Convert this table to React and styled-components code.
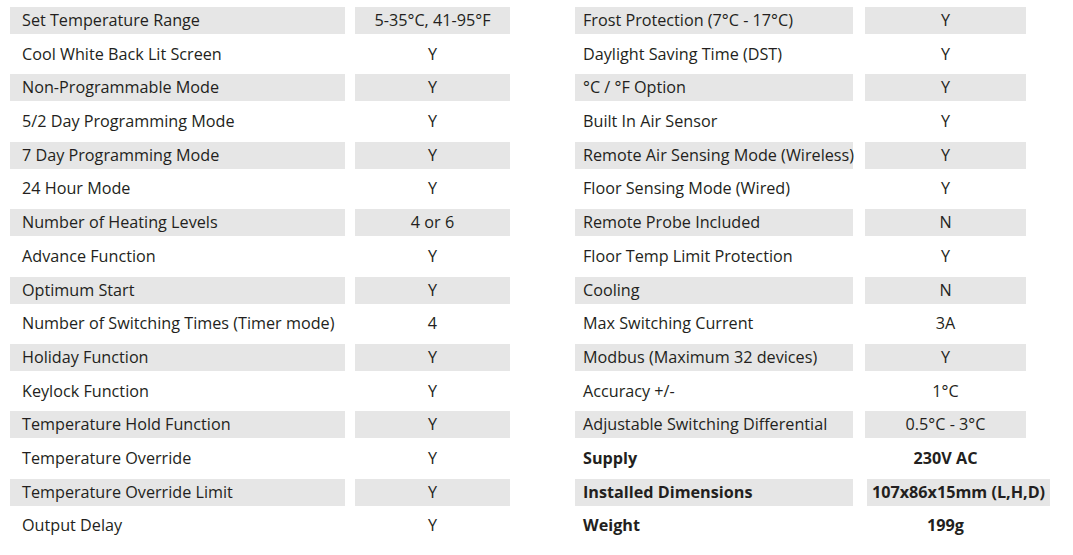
import React from "react";
import styled, { createGlobalStyle } from "styled-components";

const Global = createGlobalStyle`
  html, body { margin: 0; padding: 0; background: #ffffff; }
  body { font-family: "Open Sans", "Liberation Sans", sans-serif; color: #231f20; }
`;

const Page = styled.div`
  width: 1073px;
  height: 555px;
  box-sizing: border-box;
  padding: 7px 0 0 10px;
  display: flex;
  gap: 65px;
  overflow: hidden;
`;

const Table = styled.div`
  display: flex;
  flex-direction: column;
  gap: 6.7px;
`;

const Row = styled.div`
  display: grid;
  grid-template-columns: ${(p) => p.$cols};
  column-gap: ${(p) => p.$gap}px;
  height: 27px;
`;

const Label = styled.div`
  background: ${(p) => (p.$shaded ? "#e6e6e6" : "transparent")};
  padding: 0 0 1px ${(p) => p.$pad}px;
  display: flex;
  align-items: center;
  font-size: 16.2px;
  font-weight: ${(p) => (p.$bold ? 700 : 400)};
  white-space: nowrap;
`;

const Value = styled.div`
  background: ${(p) => (p.$shaded ? "#e6e6e6" : "transparent")};
  padding-bottom: 1px;
  display: flex;
  align-items: center;
  justify-content: center;
  font-size: 16.2px;
  font-weight: ${(p) => (p.$bold ? 700 : 400)};
  white-space: nowrap;
  width: ${(p) => (p.$width ? `${p.$width}px` : "auto")};
  margin-left: ${(p) => (p.$shift ? `${p.$shift}px` : "0")};
`;

const left = [
  ["Set Temperature Range", "5-35°C, 41-95°F"],
  ["Cool White Back Lit Screen", "Y"],
  ["Non-Programmable Mode", "Y"],
  ["5/2 Day Programming Mode", "Y"],
  ["7 Day Programming Mode", "Y"],
  ["24 Hour Mode", "Y"],
  ["Number of Heating Levels", "4 or 6"],
  ["Advance Function", "Y"],
  ["Optimum Start", "Y"],
  ["Number of Switching Times (Timer mode)", "4"],
  ["Holiday Function", "Y"],
  ["Keylock Function", "Y"],
  ["Temperature Hold Function", "Y"],
  ["Temperature Override", "Y"],
  ["Temperature Override Limit", "Y"],
  ["Output Delay", "Y"],
];

const right = [
  ["Frost Protection (7°C - 17°C)", "Y"],
  ["Daylight Saving Time (DST)", "Y"],
  ["°C / °F Option", "Y"],
  ["Built In Air Sensor", "Y"],
  ["Remote Air Sensing Mode (Wireless)", "Y"],
  ["Floor Sensing Mode (Wired)", "Y"],
  ["Remote Probe Included", "N"],
  ["Floor Temp Limit Protection", "Y"],
  ["Cooling", "N"],
  ["Max Switching Current", "3A"],
  ["Modbus (Maximum 32 devices)", "Y"],
  ["Accuracy +/-", "1°C"],
  ["Adjustable Switching Differential", "0.5°C - 3°C"],
  ["Supply", "230V AC", { bold: true }],
  ["Installed Dimensions", "107x86x15mm (L,H,D)", { bold: true, width: 183, shift: 2 }],
  ["Weight", "199g", { bold: true }],
];

function SpecTable({ rows, cols, gap, pad }) {
  return (
    <Table>
      {rows.map(([label, value, opts = {}], i) => {
        const shaded = i % 2 === 0;
        return (
          <Row key={label} $cols={cols} $gap={gap}>
            <Label $shaded={shaded} $pad={pad} $bold={opts.bold}>
              {label}
            </Label>
            <Value
              $shaded={shaded}
              $bold={opts.bold}
              $width={opts.width}
              $shift={opts.shift}
            >
              {value}
            </Value>
          </Row>
        );
      })}
    </Table>
  );
}

export default function App() {
  return (
    <>
      <Global />
      <Page>
        <SpecTable rows={left} cols="335px 155px" gap={10} pad={12} />
        <SpecTable rows={right} cols="278px 161px" gap={12} pad={8} />
      </Page>
    </>
  );
}
